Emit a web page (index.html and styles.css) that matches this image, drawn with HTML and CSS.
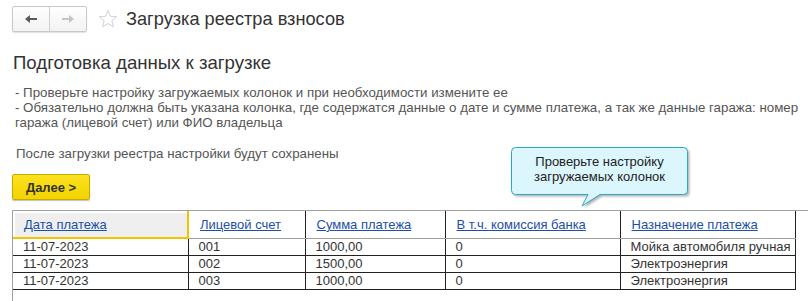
FILE: index.html
```html
<!DOCTYPE html>
<html lang="ru">
<head>
    <meta charset="UTF-8">
    <title>Загрузка реестра взносов</title>
    <link rel="stylesheet" href="styles.css">
</head>
<body>
    <div class="topbar">
        <div class="nav">
            <span class="nav-btn">
                <svg width="14" height="10" viewBox="0 0 14 10"><path d="M1 5 L6 1 L6 4 L13 4 L13 6 L6 6 L6 9 Z" fill="#5a5a5a"/></svg>
            </span>
            <span class="nav-btn">
                <svg width="14" height="10" viewBox="0 0 14 10"><path d="M13 5 L8 1 L8 4 L1 4 L1 6 L8 6 L8 9 Z" fill="#c4c4c4"/></svg>
            </span>
        </div>
        <svg class="star" width="20" height="20" viewBox="0 0 20 20"><path d="M10 1.5 L12.4 7.3 L18.6 7.7 L13.8 11.7 L15.3 17.8 L10 14.5 L4.7 17.8 L6.2 11.7 L1.4 7.7 L7.6 7.3 Z" fill="none" stroke="#d2d2d2" stroke-width="1"/></svg>
        <h1 class="title">Загрузка реестра взносов</h1>
    </div>

    <div class="content">
        <h2 class="section">Подготовка данных к загрузке</h2>
        <div class="notes">
            <p>- Проверьте настройку загружаемых колонок и при необходимости измените ее</p>
            <p>- Обязательно должна быть указана колонка, где содержатся данные о дате и сумме платежа, а так же данные гаража: номер<br>гаража (лицевой счет) или ФИО владельца</p>
        </div>
        <p class="saved">После загрузки реестра настройки будут сохранены</p>

        <div class="action-row">
            <button class="next-btn">Далее &gt;</button>
            <div class="callout">
                <svg class="callout-shape" width="182" height="64" viewBox="0 0 182 64">
                    <defs>
                        <filter id="soft" x="-10%" y="-10%" width="120%" height="130%">
                            <feGaussianBlur stdDeviation="1.2"/>
                        </filter>
                    </defs>
                    <path d="M4.5,0.5 H172.5 Q176.5,0.5 176.5,4.5 V43.5 Q176.5,47.5 172.5,47.5 H89 L71,59 L77,47.5 H4.5 Q0.5,47.5 0.5,43.5 V4.5 Q0.5,0.5 4.5,0.5 Z" transform="translate(2,2)" fill="rgba(0,0,0,0.3)" filter="url(#soft)"/>
                    <path d="M4.5,0.5 H172.5 Q176.5,0.5 176.5,4.5 V43.5 Q176.5,47.5 172.5,47.5 H89 L71,59 L77,47.5 H4.5 Q0.5,47.5 0.5,43.5 V4.5 Q0.5,0.5 4.5,0.5 Z" fill="#dcf6fd" stroke="#2aa9c6" stroke-width="1"/>
                </svg>
                <div class="callout-text">Проверьте настройку<br>загружаемых колонок</div>
            </div>
        </div>

        <div class="grid-wrap">
            <table class="grid">
                <colgroup>
                    <col class="c1"><col class="c2"><col class="c3"><col class="c4"><col class="c5"><col class="c6">
                </colgroup>
                <thead>
                    <tr>
                        <th class="selected"><a href="#">Дата платежа</a></th>
                        <th><a href="#">Лицевой счет</a></th>
                        <th><a href="#">Сумма платежа</a></th>
                        <th><a href="#">В т.ч. комиссия банка</a></th>
                        <th><a href="#">Назначение платежа</a></th>
                        <th class="empty"></th>
                    </tr>
                </thead>
                <tbody>
                    <tr><td>11-07-2023</td><td>001</td><td>1000,00</td><td>0</td><td>Мойка автомобиля ручная</td><td class="empty"></td></tr>
                    <tr><td>11-07-2023</td><td>002</td><td>1500,00</td><td>0</td><td>Электроэнергия</td><td class="empty"></td></tr>
                    <tr><td>11-07-2023</td><td>003</td><td>1000,00</td><td>0</td><td>Электроэнергия</td><td class="empty"></td></tr>
                </tbody>
            </table>
        </div>
    </div>
</body>
</html>
```

FILE: styles.css
```css
body {
    margin: 0;
    font-family: "Liberation Sans", Arial, sans-serif;
    color: #333;
    background: #fff;
    overflow: hidden;
}
.topbar {
    display: flex;
    align-items: center;
    height: 38px;
    padding: 0 0 0 12px;
}
.nav {
    display: flex;
    height: 24px;
    border: 1px solid #c8c8c8;
    border-radius: 2px;
    box-shadow: 0 1px 1px rgba(0, 0, 0, 0.12);
    background: linear-gradient(#fff, #f2f2f2);
}
.nav-btn {
    width: 36px;
    display: flex;
    align-items: center;
    justify-content: center;
}
.nav-btn + .nav-btn {
    border-left: 1px solid #d0d0d0;
}
.star {
    margin-left: 11px;
}
.title {
    margin: 0 0 0 8px;
    font-size: 18.2px;
    font-weight: normal;
    color: #333;
}
.content {
    padding: 0 0 0 12px;
}
.section {
    margin: 14px 0 0 1px;
    font-size: 18.6px;
    line-height: 22px;
    font-weight: normal;
    color: #333;
}
.notes {
    margin-top: 11px;
    padding-left: 3px;
    font-size: 13.3px;
    line-height: 15px;
    color: #555;
    white-space: nowrap;
}
.notes p, .saved {
    margin: 0;
}
.saved {
    margin-top: 16px;
    padding-left: 4px;
    font-size: 13.3px;
    line-height: 15px;
    color: #555;
}
.action-row {
    position: relative;
    height: 36px;
    margin-top: 13px;
}
.next-btn {
    height: 26px;
    width: 78px;
    border: 1px solid #c9a900;
    border-radius: 2px;
    background: linear-gradient(#fbe21f, #f3d300);
    box-shadow: 0 1px 1px rgba(0, 0, 0, 0.25);
    font-family: "Liberation Sans", Arial, sans-serif;
    font-size: 13px;
    font-weight: bold;
    color: #333;
    padding: 0;
}
.callout {
    position: absolute;
    z-index: 2;
    left: 499px;
    top: -27px;
    width: 182px;
    height: 64px;
}
.callout-shape {
    position: absolute;
    left: 0;
    top: 0;
    display: block;
}
.callout-text {
    position: relative;
    width: 177px;
    padding-top: 7px;
    text-align: center;
    font-size: 13px;
    line-height: 15px;
    color: #222;
}
.grid-wrap {
    border-top: 1px solid #a0a0a0;
    border-left: 1px solid #a0a0a0;
    height: 100px;
    width: 900px;
}
.grid {
    border-collapse: collapse;
    table-layout: fixed;
    width: 830px;
    font-size: 13px;
}
.c1 { width: 175px; }
.c2 { width: 117px; }
.c3 { width: 140px; }
.c4 { width: 175px; }
.c5 { width: 175px; }
.c6 { width: 48px; }
.grid th {
    height: 26px;
    padding: 0 0 0 11px;
    text-align: left;
    font-weight: normal;
    border-right: 1px solid #222;
    border-bottom: 1px solid #a0a0a0;
}
.grid th a {
    color: #1c4fa8;
    text-decoration: underline;
}
.grid th.selected {
    background: #efefef;
    border-right: 2px solid #f2c300;
    border-bottom: 2px solid #f2c300;
    box-shadow: inset 2px 2px 0 #fff;
}
.grid td {
    height: 16px;
    padding: 0 0 0 10px;
    line-height: 16px;
    border-right: 1px solid #222;
    border-bottom: 1px solid #222;
    white-space: nowrap;
    overflow: hidden;
    color: #333;
}
.grid .empty {
    border-right: none;
    border-bottom: none;
}
```
